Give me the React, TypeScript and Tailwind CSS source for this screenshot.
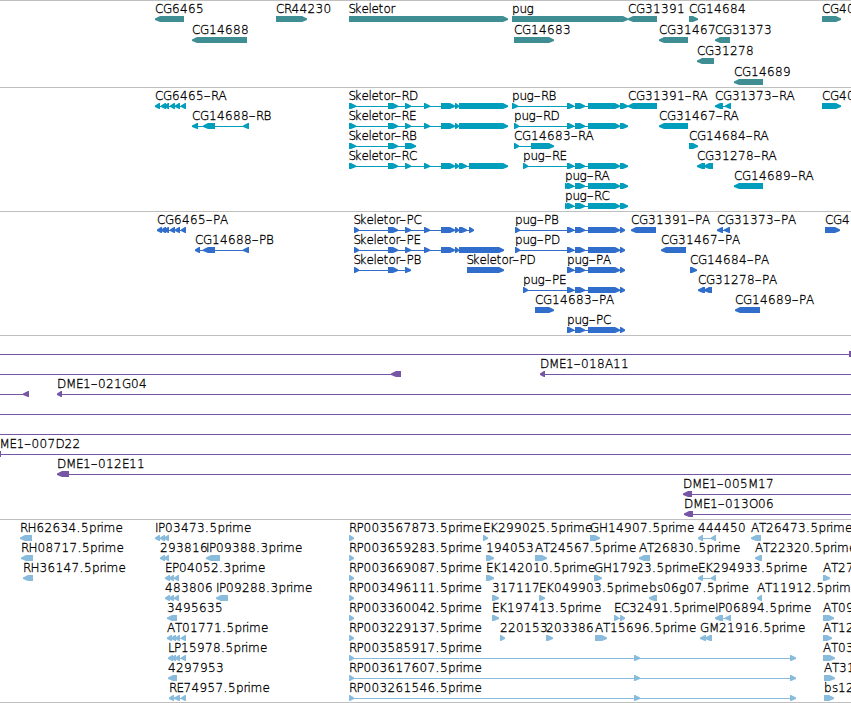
import React from "react";

type Span = [number, number];
type Feature = {
  row: number;
  label?: string;
  labelX?: number;
  dir?: "l" | "r";
  line?: Span;
  exons: Span[];
};

// glyph advances in px for the 12px track labels
const advances: Record<string, number> = {
  A: 8, C: 8, D: 9, E: 7, G: 9, H: 9, I: 3, K: 8, L: 6, M: 10, O: 9, P: 7, R: 7.5, S: 6, T: 7, B: 7,
  "-": 7, ".": 4.5, b: 8, e: 7, g: 7.5, i: 3, k: 7, l: 3, m: 12, o: 7, p: 7.5, r: 4, s: 6, t: 5, u: 7,
};

const f = (row: number, dir: "l" | "r", label: string, ...exons: Span[]): Feature => ({
  row,
  dir,
  label,
  exons,
});

const genes: Feature[] = [
  f(0, "l", "CG6465", [155, 184]),
  f(1, "l", "CG14688", [192, 247]),
  f(0, "r", "CR44230", [276, 307]),
  f(0, "r", "Skeletor", [349, 508]),
  f(0, "r", "pug", [512, 628]),
  f(1, "r", "CG14683", [514, 554]),
  f(0, "l", "CG31391", [628, 657]),
  f(1, "l", "CG31467", [659, 688]),
  f(0, "r", "CG14684", [689, 698]),
  f(1, "l", "CG31373", [715, 730]),
  f(2, "l", "CG31278", [697, 714]),
  f(3, "l", "CG14689", [734, 763]),
  f(0, "r", "CG40", [822, 841]),
];

const skeletor: Span[] = [[388, 398], [405, 411], [424, 430], [441, 455], [455, 459]];
const pugR: Span[] = [[567, 574], [575, 585], [588, 620], [620, 628]];
const pugP: Span[] = [[567, 574], [575, 585], [588, 620], [620, 625]];
const cg6465: Span[] = [[161, 166], [164, 169], [170, 175], [175, 180], [181, 186]];

const transcripts: Feature[] = [
  f(0, "l", "CG6465-RA", [155, 160], ...cg6465),
  f(1, "l", "CG14688-RB", [192, 198], [203, 215], [243, 249]),
  f(0, "r", "Skeletor-RD", [349, 356], ...skeletor, [459, 508]),
  f(1, "r", "Skeletor-RE", [349, 356], ...skeletor, [459, 508]),
  f(2, "r", "Skeletor-RB", [349, 356], [388, 398], [405, 416]),
  f(3, "r", "Skeletor-RC", [349, 356], ...skeletor, [459, 467], [469, 508]),
  f(0, "r", "pug-RB", [512, 518], ...pugR),
  f(1, "r", "pug-RD", [514, 519], ...pugR),
  f(2, "r", "CG14683-RA", [514, 519], [531, 554]),
  f(3, "r", "pug-RE", [523, 528], ...pugR),
  f(4, "r", "pug-RA", [565, 569], ...pugR),
  f(5, "r", "pug-RC", [565, 569], ...pugR),
  f(0, "l", "CG31391-RA", [628, 657]),
  f(0, "l", "CG31373-RA", [715, 723], [725, 731]),
  f(1, "l", "CG31467-RA", [659, 688]),
  f(2, "r", "CG14684-RA", [689, 698]),
  f(3, "l", "CG31278-RA", [697, 705], [704, 713]),
  f(4, "l", "CG14689-RA", [734, 763]),
  f(0, "r", "CG40", [822, 841]),
];

const proteins: Feature[] = [
  f(0, "l", "CG6465-PA", [157, 162], ...cg6465),
  f(1, "l", "CG14688-PB", [195, 200], [203, 215], [243, 249]),
  f(0, "r", "Skeletor-PC", [354, 359], ...skeletor, [459, 467], [469, 474]),
  f(1, "r", "Skeletor-PE", [354, 359], ...skeletor, [459, 504]),
  f(2, "r", "Skeletor-PB", [354, 359], [388, 398], [405, 411]),
  f(2, "r", "Skeletor-PD", [467, 504]),
  f(0, "r", "pug-PB", [515, 520], ...pugP),
  f(1, "r", "pug-PD", [515, 520], ...pugP),
  f(2, "r", "pug-PA", ...pugP),
  f(3, "r", "pug-PE", [523, 528], ...pugP),
  f(4, "r", "CG14683-PA", [535, 554]),
  f(5, "r", "pug-PC", ...pugP),
  f(0, "l", "CG31391-PA", [631, 656]),
  f(0, "l", "CG31373-PA", [717, 723], [724, 730]),
  f(1, "l", "CG31467-PA", [661, 686]),
  f(2, "r", "CG14684-PA", [690, 697]),
  f(3, "l", "CG31278-PA", [698, 705], [704, 712]),
  f(4, "l", "CG14689-PA", [735, 760]),
  f(0, "r", "CG4", [825, 840]),
];

const clones: Feature[] = [
  { row: 0, line: [0, 851], exons: [[849, 860]], dir: "r" },
  { row: 1, line: [0, 395], exons: [[391, 401]], dir: "l" },
  { row: 1, label: "DME1-018A11", line: [540, 851], exons: [[540, 545]], dir: "l" },
  { row: 2, line: [0, 26], exons: [[23, 29]], dir: "l" },
  { row: 2, label: "DME1-021G04", line: [57, 851], exons: [[57, 62]], dir: "l" },
  { row: 3, line: [0, 851], exons: [] },
  { row: 4, line: [0, 851], exons: [] },
  { row: 5, label: "DME1-007D22", labelX: -9.5, line: [0, 851], exons: [[-4, 1]], dir: "l" },
  { row: 6, label: "DME1-012E11", line: [57, 851], exons: [[57, 69]], dir: "l" },
  { row: 7, label: "DME1-005M17", line: [683, 851], exons: [[683, 692]], dir: "l" },
  { row: 8, label: "DME1-013O06", line: [684, 851], exons: [[684, 693]], dir: "l" },
];

const ests: Feature[] = [
  f(0, "l", "RH62634.5prime", [20, 32]),
  f(1, "l", "RH08717.5prime", [21, 33]),
  f(2, "l", "RH36147.5prime", [23, 33]),
  f(0, "l", "IP03473.5prime", [155, 160], [160, 165], [164, 169]),
  f(1, "l", "293816", [160, 165], [164, 169]),
  f(1, "l", "IP09388.3prime", [206, 220]),
  f(2, "l", "EP04052.3prime", [165, 170], [169, 174], [174, 179]),
  f(3, "l", "483806", [165, 170], [169, 174], [174, 179]),
  f(3, "l", "IP09288.3prime", [216, 228]),
  f(4, "l", "3495635", [167, 177]),
  f(5, "l", "AT01771.5prime", [167, 172], [171, 176], [175, 180], [181, 186]),
  f(6, "l", "LP15978.5prime", [168, 173], [171, 176], [175, 180], [181, 186]),
  f(7, "l", "4297953", [168, 177]),
  f(8, "l", "RE74957.5prime", [169, 174], [174, 180], [181, 186]),
  f(0, "r", "RP003567873.5prime", [349, 354]),
  f(1, "r", "RP003659283.5prime", [349, 354]),
  f(2, "r", "RP003669087.5prime", [349, 354]),
  f(3, "r", "RP003496111.5prime", [349, 354]),
  f(4, "r", "RP003360042.5prime", [349, 354]),
  f(5, "r", "RP003229137.5prime", [349, 354]),
  f(6, "r", "RP003585917.5prime", [349, 354], [634, 640], [790, 796]),
  f(7, "r", "RP003617607.5prime", [349, 354], [634, 640], [790, 796]),
  f(8, "r", "RP003261546.5prime", [349, 354], [634, 640], [790, 796]),
  f(0, "r", "EK299025.5prime", [483, 488]),
  f(1, "r", "194053", [486, 494]),
  f(1, "r", "AT24567.5prime", [535, 547]),
  f(2, "r", "EK142010.5prime", [486, 494]),
  f(3, "r", "317117", [492, 499]),
  f(3, "r", "EK049903.5prime", [539, 545]),
  f(4, "r", "EK197413.5prime", [492, 499]),
  f(5, "r", "220153", [500, 505]),
  f(5, "r", "203386", [546, 553]),
  f(5, "r", "AT15696.5prime", [595, 607]),
  f(0, "r", "GH14907.5prime", [590, 600]),
  f(2, "r", "GH17923.5prime", [594, 602]),
  f(1, "l", "AT26830.5prime", [639, 650]),
  f(0, "l", "444450", [698, 703], [711, 716]),
  f(2, "l", "EK294933.5prime", [698, 703], [711, 716]),
  f(0, "l", "AT26473.5prime", [751, 761]),
  f(1, "l", "AT22320.5prime", [755, 762]),
  f(3, "l", "bs06g07.5prime", [649, 657]),
  f(3, "l", "AT11912.5prime", [757, 762]),
  f(4, "r", "EC32491.5prime", [614, 619], [620, 625]),
  f(4, "l", "IP06894.5prime", [715, 723], [725, 731]),
  f(5, "l", "GM21916.5prime", [700, 706], [705, 712]),
  f(2, "r", "AT27", [823, 830]),
  f(4, "r", "AT09", [823, 834]),
  f(5, "r", "AT12", [823, 832]),
  f(6, "r", "AT03", [823, 835]),
  f(7, "r", "AT31", [824, 835]),
  f(8, "r", "bs12", [824, 834]),
];

const Label = ({ text, x, y }: { text: string; x: number; y: number }) => {
  let pos = text.startsWith("S") ? x - 0.5 : x;
  const xs = text.split("").map((c) => {
    const at = pos;
    pos += advances[c] ?? 8;
    return at;
  });
  const dash = text.indexOf("-");
  if (dash < 0) {
    return (
      <text x={xs.join(" ")} y={y}>
        {text}
      </text>
    );
  }
  return (
    <text>
      <tspan x={xs.slice(0, dash).join(" ")} y={y}>
        {text.slice(0, dash)}
      </tspan>
      {/* the dash is wide and sits low */}
      <tspan x={xs[dash] - 0.5} y={y + 2} className="text-[20px]">
        -
      </tspan>
      <tspan x={xs.slice(dash + 1).join(" ")} y={y}>
        {text.slice(dash + 1)}
      </tspan>
    </text>
  );
};

const Exon = ({ span: [a, b], dir, y }: { span: Span; dir?: "l" | "r"; y: number }) => {
  const head = Math.min(6, b - a);
  const [tip, base, s] = dir === "l" ? [a, b, 1] : [b, a, -1];
  const neck = tip + s * (head - 1);
  return (
    <polygon
      points={`${tip},${y + 2.5} ${neck},${y} ${base},${y} ${base},${y + 6} ${neck},${y + 6} ${tip},${y + 4}`}
    />
  );
};

const Track = ({ features, step = 20, className }: { features: Feature[]; step?: number; className: string }) => (
  <section className={`w-full overflow-hidden border-t border-[#bfbfbf] ${className}`}>
    <svg className="block h-full w-[851px]">
      {features.map((feature, i) => {
        const y = 15 + feature.row * step;
        const { exons, dir } = feature;
        const line = feature.line ?? [exons[0][0], exons[exons.length - 1][1]];
        return (
          <g key={i}>
            {(feature.line || exons.length > 1) && (
              <rect x={line[0]} y={y + 3} width={line[1] - line[0]} height={1} />
            )}
            {exons.map((span, n) => (
              <Exon key={n} span={span} dir={dir} y={y} />
            ))}
          </g>
        );
      })}
      <g className="fill-black stroke-black stroke-[0.3px] text-[12px] font-extralight">
        {features.map(
          ({ label, labelX, exons, row }, i) =>
            label && <Label key={i} text={label} x={labelX ?? exons[0][0]} y={12 + row * step} />
        )}
      </g>
    </svg>
  </section>
);

export default function App() {
  return (
    <main className="flex h-[703px] w-[851px] flex-col overflow-hidden border-b border-[#bfbfbf] bg-white font-['DejaVu_Sans',sans-serif]">
      <Track features={genes} step={21} className="h-[87px] fill-[#3f8e93]" />
      <Track features={transcripts} className="h-[124px] fill-[#009dbd]" />
      <Track features={proteins} className="h-[124px] fill-[#316dcb]" />
      <Track features={clones} className="h-[184px] fill-[#7755a5]" />
      <Track features={ests} className="h-[183px] fill-[#89bcdc]" />
    </main>
  );
}
